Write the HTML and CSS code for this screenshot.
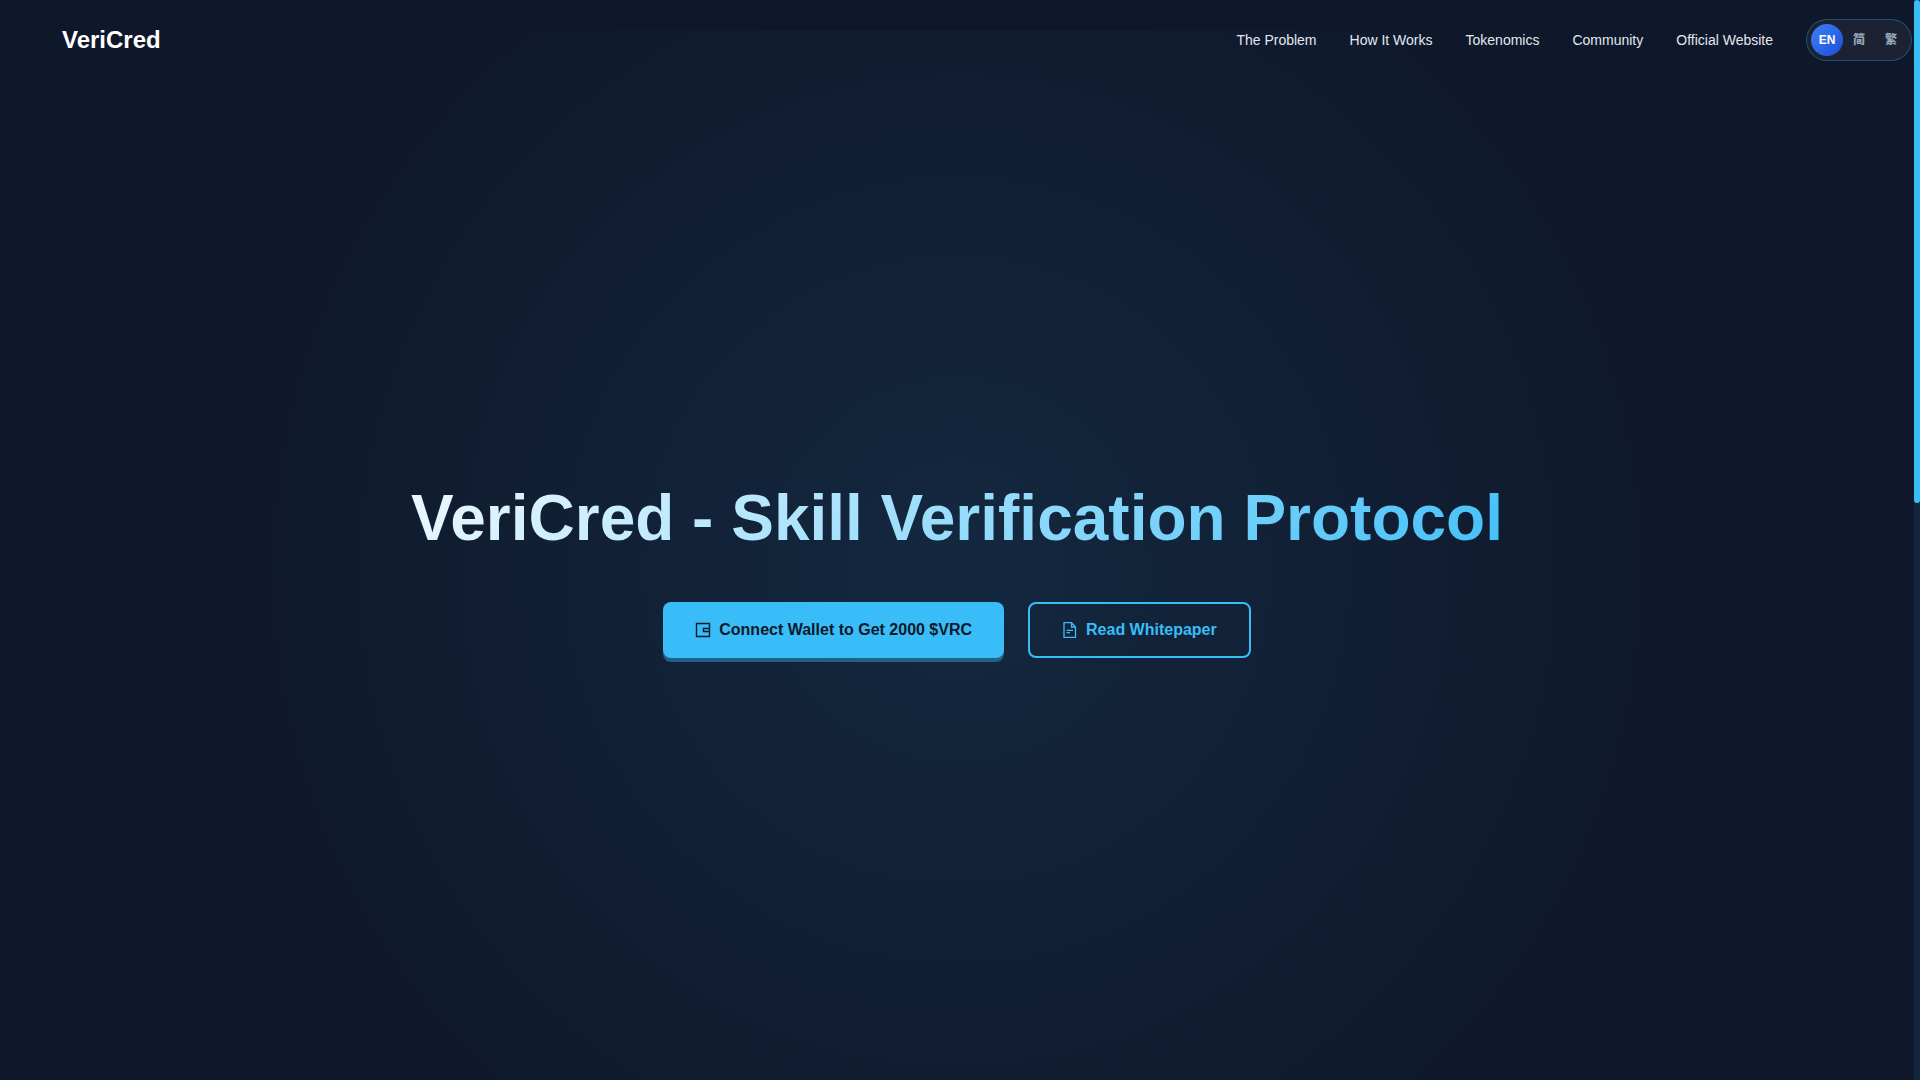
FILE: index.html
```html
<!DOCTYPE html>
<html lang="en">
<head>
<meta charset="utf-8">
<title>VeriCred - Skill Verification Protocol</title>
<link rel="stylesheet" href="styles.css">
</head>
<body>
<header class="site-header">
  <a class="logo" href="#">VeriCred</a>
  <nav class="nav">
    <a class="nav-link" href="#problem">The Problem</a>
    <a class="nav-link" href="#how">How It Works</a>
    <a class="nav-link" href="#tokenomics">Tokenomics</a>
    <a class="nav-link" href="#community">Community</a>
    <a class="nav-link" href="#site">Official Website</a>
    <div class="lang">
      <button class="lang-btn active" type="button">EN</button>
      <button class="lang-btn" type="button">简</button>
      <button class="lang-btn" type="button">繁</button>
    </div>
  </nav>
</header>
<main class="hero">
  <h1 class="title">VeriCred - Skill Verification Protocol</h1>
  <div class="actions">
    <button class="btn btn-primary" type="button">
      <svg class="icon" viewBox="0 0 16 16" fill="none" stroke="currentColor" stroke-width="1.4" aria-hidden="true"><path d="M14.5 1.500h-13v13h13zM14.500 6.500H8.500v3h6"/></svg>
      Connect Wallet to Get 2000 $VRC
    </button>
    <a class="btn btn-outline" href="#whitepaper">
      <svg class="icon" viewBox="0 0 16 16" fill="none" stroke="currentColor" stroke-width="1.3" aria-hidden="true"><path d="M9.500.7h-7.500v14.600h11.500V5zM9.500.7V5h4M4.500 8.300h6.500M4.500 10.700h3.500"/></svg>
      Read Whitepaper
    </a>
  </div>
</main>
<div class="scroll-track" aria-hidden="true"><div class="scroll-thumb"></div></div>
</body>
</html>
```
FILE: styles.css
```css
* {
  box-sizing: border-box;
}

body {
  margin: 0;
  padding-right: 6px;
  height: 100vh;
  overflow: hidden;
  font-family: "Liberation Sans", "Noto Sans CJK SC", sans-serif;
  color: #e2e8f0;
  background: #0f172a;
}

a {
  color: inherit;
  text-decoration: none;
}

.site-header {
  position: relative;
  z-index: 1;
  display: flex;
  align-items: center;
  justify-content: space-between;
  height: 80px;
  padding: 0 2px 0 62px;
}

.logo {
  font-size: 24px;
  font-weight: 700;
  color: #fff;
}

.nav {
  display: flex;
  align-items: center;
  gap: 33px;
}

.nav-link {
  font-size: 14px;
  line-height: 24px;
}

.lang {
  display: flex;
  padding: 4px;
  border: 1px solid rgba(56, 189, 248, 0.3);
  border-radius: 21px;
  background: rgba(255, 255, 255, 0.05);
}

.lang-btn {
  width: 32px;
  height: 32px;
  padding: 0;
  border: 0;
  border-radius: 50%;
  background: none;
  color: #94a3b8;
  font: 900 12px/24px "Liberation Sans", "Noto Sans CJK SC", sans-serif;
}

.lang-btn.active {
  color: #fff;
  background: linear-gradient(135deg, #3b82f6, #1d4ed8);
}

.hero {
  display: flex;
  flex-direction: column;
  align-items: center;
  justify-content: center;
  gap: 42px;
  min-height: 100vh;
  margin-top: -50px;
  padding-bottom: 6px;
  background: radial-gradient(circle, rgba(56, 189, 248, 0.1), transparent 70%);
}

.title {
  margin: 0;
  padding: 0 72px;
  font-size: 64px;
  line-height: 84px;
  color: transparent;
  background: linear-gradient(135deg, #f8fcff, #38bdf8);
  background-clip: text;
}

.actions {
  display: flex;
  gap: 24px;
}

.btn {
  display: flex;
  align-items: center;
  gap: 8px;
  height: 56px;
  padding: 0 32px;
  border: 0;
  border-radius: 8px;
  font: 700 16px/24px "Liberation Sans", sans-serif;
}

.btn-primary {
  color: #0f172a;
  background: #38bdf8;
  box-shadow: 0 4px 0 rgba(56, 189, 248, 0.4);
}

.btn-outline {
  color: #38bdf8;
  border: 2px solid #38bdf8;
}

.icon {
  width: 16px;
  height: 16px;
}

.scroll-track {
  position: fixed;
  top: 0;
  right: 0;
  bottom: 0;
  width: 6px;
  background: #132640;
}

.scroll-thumb {
  height: 46.6%;
  border-radius: 3px;
  background: #38bdf8;
}
```
